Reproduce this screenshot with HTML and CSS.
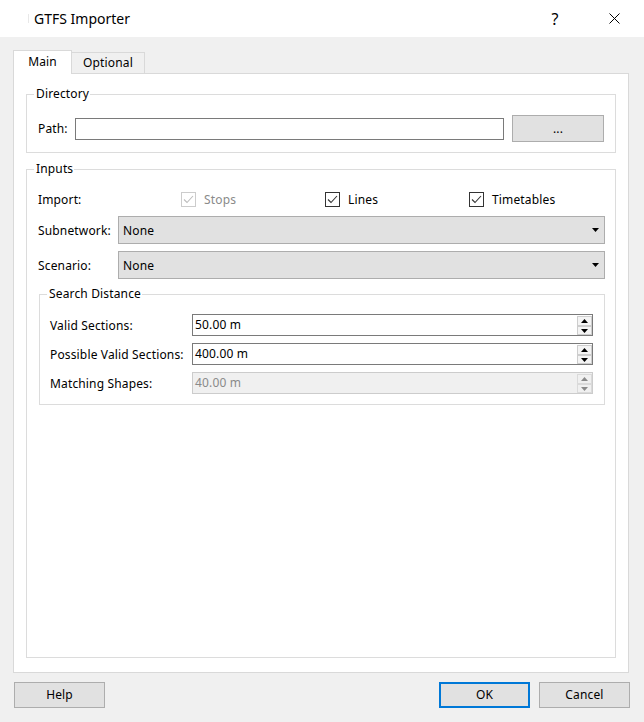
FILE: index.html
```html
<!DOCTYPE html>
<html>
<head>
<meta charset="utf-8">
<link rel="stylesheet" href="styles.css">
</head>
<body>
<div class="titlebar">
  <span class="title-mark"></span>
  <span class="title">GTFS Importer</span>
  <span class="help">?</span>
  <span class="close"><svg width="11" height="11" viewBox="0 0 11 11"><line x1="0.5" y1="0.5" x2="10.5" y2="10.5" stroke="#000" stroke-width="1"/><line x1="10.5" y1="0.5" x2="0.5" y2="10.5" stroke="#000" stroke-width="1"/></svg></span>
</div>
<div class="main">
  <div class="tabs">
    <div class="tab active">Main</div>
    <div class="tab">Optional</div>
  </div>
  <div class="pane">
    <fieldset class="group dir">
      <legend>Directory</legend>
      <div class="path-row">
        <span class="path-label">Path:</span>
        <div class="textbox"></div>
        <div class="btn browse">...</div>
      </div>
    </fieldset>
    <fieldset class="group inputs">
      <legend>Inputs</legend>
      <div class="import-row">
        <span>Import:</span>
        <span class="check disabled"><svg width="15" height="15" viewBox="0 0 15 15"><rect x="0.5" y="0.5" width="14" height="14" fill="#fff" stroke="#cccccc"/><polyline points="3,7.5 6,10.5 12,4" fill="none" stroke="#bcbcbc" stroke-width="1.1"/></svg><span class="check-text">Stops</span></span>
        <span class="check"><svg width="15" height="15" viewBox="0 0 15 15"><rect x="0.5" y="0.5" width="14" height="14" fill="#fff" stroke="#333"/><polyline points="3,7.5 6,10.5 12,4" fill="none" stroke="#333" stroke-width="1.1"/></svg><span class="check-text">Lines</span></span>
        <span class="check"><svg width="15" height="15" viewBox="0 0 15 15"><rect x="0.5" y="0.5" width="14" height="14" fill="#fff" stroke="#333"/><polyline points="3,7.5 6,10.5 12,4" fill="none" stroke="#333" stroke-width="1.1"/></svg><span class="check-text">Timetables</span></span>
      </div>
      <div class="combo-row first">
        <span class="combo-label">Subnetwork:</span>
        <div class="combo"><span>None</span><svg width="7" height="4" viewBox="0 0 7 4"><polygon points="0,0 7,0 3.5,4" fill="#000"/></svg></div>
      </div>
      <div class="combo-row">
        <span class="combo-label">Scenario:</span>
        <div class="combo"><span>None</span><svg width="7" height="4" viewBox="0 0 7 4"><polygon points="0,0 7,0 3.5,4" fill="#000"/></svg></div>
      </div>
      <fieldset class="group search">
        <legend>Search Distance</legend>
        <div class="spin-row">
          <span class="spin-label">Valid Sections:</span>
          <div class="spinbox">
            <span class="spin-value">50.00 m</span>
            <div class="spin-btns">
              <div class="spin-btn up"><svg width="7" height="4" viewBox="0 0 7 4"><polygon points="0,4 7,4 3.5,0" fill="#000"/></svg></div>
              <div class="spin-btn down"><svg width="7" height="4" viewBox="0 0 7 4"><polygon points="0,0 7,0 3.5,4" fill="#000"/></svg></div>
            </div>
          </div>
        </div>
        <div class="spin-row">
          <span class="spin-label">Possible Valid Sections:</span>
          <div class="spinbox">
            <span class="spin-value">400.00 m</span>
            <div class="spin-btns">
              <div class="spin-btn up"><svg width="7" height="4" viewBox="0 0 7 4"><polygon points="0,4 7,4 3.5,0" fill="#000"/></svg></div>
              <div class="spin-btn down"><svg width="7" height="4" viewBox="0 0 7 4"><polygon points="0,0 7,0 3.5,4" fill="#000"/></svg></div>
            </div>
          </div>
        </div>
        <div class="spin-row">
          <span class="spin-label">Matching Shapes:</span>
          <div class="spinbox disabled">
            <span class="spin-value">40.00 m</span>
            <div class="spin-btns">
              <div class="spin-btn up"><svg width="7" height="4" viewBox="0 0 7 4"><polygon points="0,4 7,4 3.5,0" fill="#8a8a8a"/></svg></div>
              <div class="spin-btn down"><svg width="7" height="4" viewBox="0 0 7 4"><polygon points="0,0 7,0 3.5,4" fill="#8a8a8a"/></svg></div>
            </div>
          </div>
        </div>
      </fieldset>
    </fieldset>
  </div>
  <div class="footer">
    <div class="btn">Help</div>
    <div class="spacer"></div>
    <div class="btn default">OK</div>
    <div class="btn">Cancel</div>
  </div>
</div>
</body>
</html>
```
FILE: styles.css
```css
* { box-sizing: border-box; }

html, body {
  margin: 0;
  padding: 0;
}

body {
  width: 644px;
  height: 722px;
  overflow: hidden;
  background: #f0f0f0;
  font-family: "Noto Sans", "Segoe UI", sans-serif;
  font-size: 12px;
  letter-spacing: 0.15px;
  color: #000;
}

/* title bar */
.titlebar {
  height: 37px;
  background: #fff;
  display: flex;
  align-items: center;
  padding-left: 28px;
}
.title-mark {
  width: 1px;
  height: 9px;
  background: #e8e8e8;
  margin-right: 5px;
}
.title {
  flex: 1;
  font-size: 14px;
  line-height: 18px;
  letter-spacing: 0;
}
.help {
  width: 20px;
  margin-right: 19px;
  text-align: center;
  font-size: 16px;
  line-height: 18px;
}
.close {
  width: 60px;
  display: flex;
  justify-content: center;
  align-items: center;
}
.close svg { display: block; }

/* main area */
.main {
  padding: 13px 0 0 13px;
}

.tabs {
  display: flex;
  align-items: flex-end;
  height: 23px;
}
.tab {
  text-align: center;
  border-top: 1px solid #d9d9d9;
  border-right: 1px solid #d9d9d9;
  background: #f0f0f0;
  width: 73px;
  height: 21px;
  line-height: 20px;
}
.tab.active {
  position: relative;
  z-index: 1;
  width: 59px;
  height: 24px;
  margin-bottom: -1px;
  line-height: 22px;
  background: #fff;
  border-left: 1px solid #d9d9d9;
}

.pane {
  width: 616px;
  height: 600px;
  background: #fff;
  border: 1px solid #d9d9d9;
  padding: 12px 12px 14px 12px;
  display: flex;
  flex-direction: column;
}

fieldset.group {
  margin: 0;
  min-width: 0;
  border: 1px solid #dcdcdc;
}
fieldset.group > legend {
  padding: 0 1px 0 2px;
  line-height: 16px;
  margin-left: -4px;
}

fieldset.dir {
  padding: 13px 11px 10px 11px;
}
.path-row {
  display: flex;
  align-items: center;
  height: 27px;
}
.path-label {
  width: 37px;
}
.textbox {
  flex: 1;
  height: 22px;
  border: 1px solid #7a7a7a;
  background: #fff;
}
.btn {
  width: 91px;
  height: 26px;
  background: #e1e1e1;
  border: 1px solid #adadad;
  text-align: center;
  line-height: 24px;
}
.browse {
  width: 92px;
  height: 27px;
  margin-left: 8px;
  line-height: 25px;
}

fieldset.inputs {
  margin-top: 8px;
  flex: 1;
  padding: 12px 10px 0 11px;
}

.import-row {
  display: grid;
  grid-template-columns: 143px 144px 144px 1fr;
  align-items: center;
  height: 21px;
}
.check {
  display: flex;
  align-items: center;
}
.check svg { display: block; }
.check-text {
  margin-left: 8px;
}
.check.disabled .check-text {
  color: #8a8a8a;
}

.combo-row {
  display: flex;
  align-items: center;
  margin-top: 7px;
}
.combo-row.first {
  margin-top: 6px;
}
.combo-label {
  width: 80px;
}
.combo {
  flex: 1;
  height: 28px;
  background: #e1e1e1;
  border: 1px solid #adadad;
  padding: 0 5px 0 4px;
  display: flex;
  align-items: center;
  justify-content: space-between;
}
.combo svg { display: block; }

fieldset.search {
  margin: 7px 0 0 1px;
  padding: 12px 11px 10px 10px;
}
fieldset.search > legend {
  margin-left: -3px;
}
.spin-row {
  display: flex;
  align-items: center;
  margin-top: 7px;
}
.spin-row:first-of-type {
  margin-top: 0;
}
.spin-label {
  width: 142px;
}
.spinbox {
  flex: 1;
  height: 22px;
  border: 1px solid #7a7a7a;
  background: #fff;
  display: flex;
  align-items: stretch;
}
.spin-value {
  flex: 1;
  padding-left: 2px;
  line-height: 20px;
}
.spin-btns {
  width: 15px;
  padding-top: 1px;
  display: flex;
  flex-direction: column;
}
.spin-btn {
  background: #f4f4f4;
  border: 1px solid #cdcdcd;
  display: flex;
  align-items: center;
  justify-content: center;
}
.spin-btn svg { display: block; }
.spin-btn.up { height: 10px; }
.spin-btn.down { height: 9px; }

.spinbox.disabled {
  border-color: #cccccc;
  background: #f0f0f0;
}
.spinbox.disabled .spin-value {
  color: #8a8a8a;
}
.spinbox.disabled .spin-btn {
  background: #f0f0f0;
  border-color: #dadada;
}

/* footer */
.footer {
  display: flex;
  width: 617px;
  margin-top: 9px;
  padding-left: 1px;
}
.spacer { flex: 1; }
.btn.default {
  border: 2px solid #0078d7;
  line-height: 22px;
  margin-right: 9px;
}
```
